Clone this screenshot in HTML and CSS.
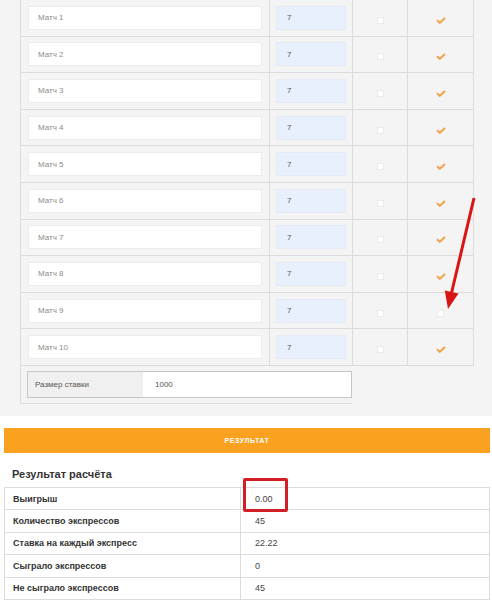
FILE: index.html
```html
<!DOCTYPE html>
<html><head>
<meta charset="utf-8">
<link rel="stylesheet" href="styles.css">
</head>
<body>

<div class="calc">
	<div class="row"><div class="cell"><input class="match" value="Матч 1"></div><div class="cell"><input class="odds" value="7"></div><div class="cell center"><span class="box"></span></div><div class="cell center"><svg class="tick" viewBox="0 0 10 7"><path d="M1 3.2 L3.8 5.8 L9 1"/></svg></div></div>
	<div class="row"><div class="cell"><input class="match" value="Матч 2"></div><div class="cell"><input class="odds" value="7"></div><div class="cell center"><span class="box"></span></div><div class="cell center"><svg class="tick" viewBox="0 0 10 7"><path d="M1 3.2 L3.8 5.8 L9 1"/></svg></div></div>
	<div class="row"><div class="cell"><input class="match" value="Матч 3"></div><div class="cell"><input class="odds" value="7"></div><div class="cell center"><span class="box"></span></div><div class="cell center"><svg class="tick" viewBox="0 0 10 7"><path d="M1 3.2 L3.8 5.8 L9 1"/></svg></div></div>
	<div class="row"><div class="cell"><input class="match" value="Матч 4"></div><div class="cell"><input class="odds" value="7"></div><div class="cell center"><span class="box"></span></div><div class="cell center"><svg class="tick" viewBox="0 0 10 7"><path d="M1 3.2 L3.8 5.8 L9 1"/></svg></div></div>
	<div class="row"><div class="cell"><input class="match" value="Матч 5"></div><div class="cell"><input class="odds" value="7"></div><div class="cell center"><span class="box"></span></div><div class="cell center"><svg class="tick" viewBox="0 0 10 7"><path d="M1 3.2 L3.8 5.8 L9 1"/></svg></div></div>
	<div class="row"><div class="cell"><input class="match" value="Матч 6"></div><div class="cell"><input class="odds" value="7"></div><div class="cell center"><span class="box"></span></div><div class="cell center"><svg class="tick" viewBox="0 0 10 7"><path d="M1 3.2 L3.8 5.8 L9 1"/></svg></div></div>
	<div class="row"><div class="cell"><input class="match" value="Матч 7"></div><div class="cell"><input class="odds" value="7"></div><div class="cell center"><span class="box"></span></div><div class="cell center"><svg class="tick" viewBox="0 0 10 7"><path d="M1 3.2 L3.8 5.8 L9 1"/></svg></div></div>
	<div class="row"><div class="cell"><input class="match" value="Матч 8"></div><div class="cell"><input class="odds" value="7"></div><div class="cell center"><span class="box"></span></div><div class="cell center"><svg class="tick" viewBox="0 0 10 7"><path d="M1 3.2 L3.8 5.8 L9 1"/></svg></div></div>
	<div class="row"><div class="cell"><input class="match" value="Матч 9"></div><div class="cell"><input class="odds" value="7"></div><div class="cell center"><span class="box"></span></div><div class="cell center"><span class="box"></span></div></div>
	<div class="row"><div class="cell"><input class="match" value="Матч 10"></div><div class="cell"><input class="odds" value="7"></div><div class="cell center"><span class="box"></span></div><div class="cell center"><svg class="tick" viewBox="0 0 10 7"><path d="M1 3.2 L3.8 5.8 L9 1"/></svg></div></div>

	<div class="stake-row">
		<div class="stake">
			<span class="stake-label">Размер ставки</span>
			<span class="stake-value">1000</span>
		</div>
	</div>
</div>

<div class="result">
	<a class="calc-button">Результат</a>

	<h3>Результат расчёта</h3>

	<div class="result-table">
		<table>
			<tr><th>Выигрыш</th><td>0.00</td></tr>
			<tr><th>Количество экспрессов</th><td>45</td></tr>
			<tr><th>Ставка на каждый экспресс</th><td>22.22</td></tr>
			<tr><th>Сыграло экспрессов</th><td>0</td></tr>
			<tr><th>Не сыграло экспрессов</th><td>45</td></tr>
		</table>
		<div class="mark"></div>
	</div>
</div>

<!-- pointer to the unticked box in row 9 -->
<svg class="arrow" width="492" height="600" viewBox="0 0 492 600">
	<line x1="474" y1="198" x2="451.5" y2="293"/>
	<polygon points="448,309 458.5,293.5 444.8,290.4"/>
</svg>

</body>
</html>
```

FILE: styles.css
```css
body
{
	margin: 0;
	background-color: white;
	font-family: "Liberation Sans", Arial, sans-serif;
	color: #333;
	width: 492px;
	position: relative;
}
.calc
{
	background-color: #f4f4f4;
	padding: 0 18px 12px 20px;
}
.row
{
	display: grid;
	grid-template-columns: 249px 83px 55px 66px;
	height: 36.6px;
	box-sizing: border-box;
	border-left: 1px solid #dcdcdc;
	border-bottom: 1px solid #dcdcdc;
}
.cell
{
	border-right: 1px solid #dcdcdc;
	display: flex;
	align-items: center;
	padding: 0 7px;
}
.cell + .cell
{
	padding: 0 6px;
}
.center
{
	justify-content: center;
}
input
{
	font-family: inherit;
	font-size: 8px;
	height: 24px;
	box-sizing: border-box;
	margin: 0;
	outline: none;
	width: 100%;
}
.match
{
	background-color: white;
	border: 1px solid #ececec;
	color: #8c8c8c;
	padding: 0 9px;
}
.odds
{
	background-color: #e8f0fe;
	border: 1px solid #e3eaf6;
	color: #555;
	padding: 0 10px;
}
.box
{
	width: 7px;
	height: 7px;
	background-color: white;
	border: 1px solid #eaeaea;
	box-sizing: border-box;
	margin-top: 5px;
}
.tick
{
	width: 10px;
	height: 7px;
	margin-top: 5px;
}
.tick path
{
	fill: none;
	stroke: #f2a14c;
	stroke-width: 2;
}
.stake-row
{
	width: 332px;
	box-sizing: border-box;
	border-left: 1px solid #dcdcdc;
	border-bottom: 1px solid #dcdcdc;
	padding: 5px 0 5px 6px;
}
.stake
{
	display: flex;
	height: 27px;
	box-sizing: border-box;
	border: 1px solid #c6c6c6;
	font-size: 8px;
	color: #555;
}
.stake-label
{
	width: 115px;
	background-color: #f0f0f0;
	padding-left: 7px;
	line-height: 25px;
	box-sizing: border-box;
}
.stake-value
{
	flex: 1;
	background-color: white;
	padding-left: 12px;
	line-height: 25px;
}
.result
{
	padding: 12px 2px 0 4px;
}
.calc-button
{
	display: block;
	height: 25px;
	line-height: 25px;
	background-color: #faa21f;
	color: white;
	text-align: center;
	text-transform: uppercase;
	font-size: 7px;
	font-weight: bold;
	letter-spacing: 0.6px;
}
h3
{
	font-size: 11px;
	line-height: 14px;
	font-weight: bold;
	color: #333;
	margin: 14px 0 6px 8px;
}
.result-table
{
	position: relative;
}
table
{
	width: 100%;
	border-collapse: collapse;
	font-size: 9px;
}
th, td
{
	border: 1px solid #dcdcdc;
	height: 22.4px;
	box-sizing: border-box;
	padding: 0 0 0 8px;
	text-align: left;
}
th
{
	width: 236px;
	font-weight: bold;
	color: #333;
}
td
{
	padding-left: 14px;
	color: #444;
}
.mark
{
	position: absolute;
	left: 239px;
	top: -9px;
	width: 45px;
	height: 34px;
	box-sizing: border-box;
	border: 3px solid #d21f26;
	border-radius: 2px;
}
.arrow
{
	position: absolute;
	top: 0;
	left: 0;
	pointer-events: none;
}
.arrow line
{
	stroke: #d91414;
	stroke-width: 3;
}
.arrow polygon
{
	fill: #d91414;
}
```
